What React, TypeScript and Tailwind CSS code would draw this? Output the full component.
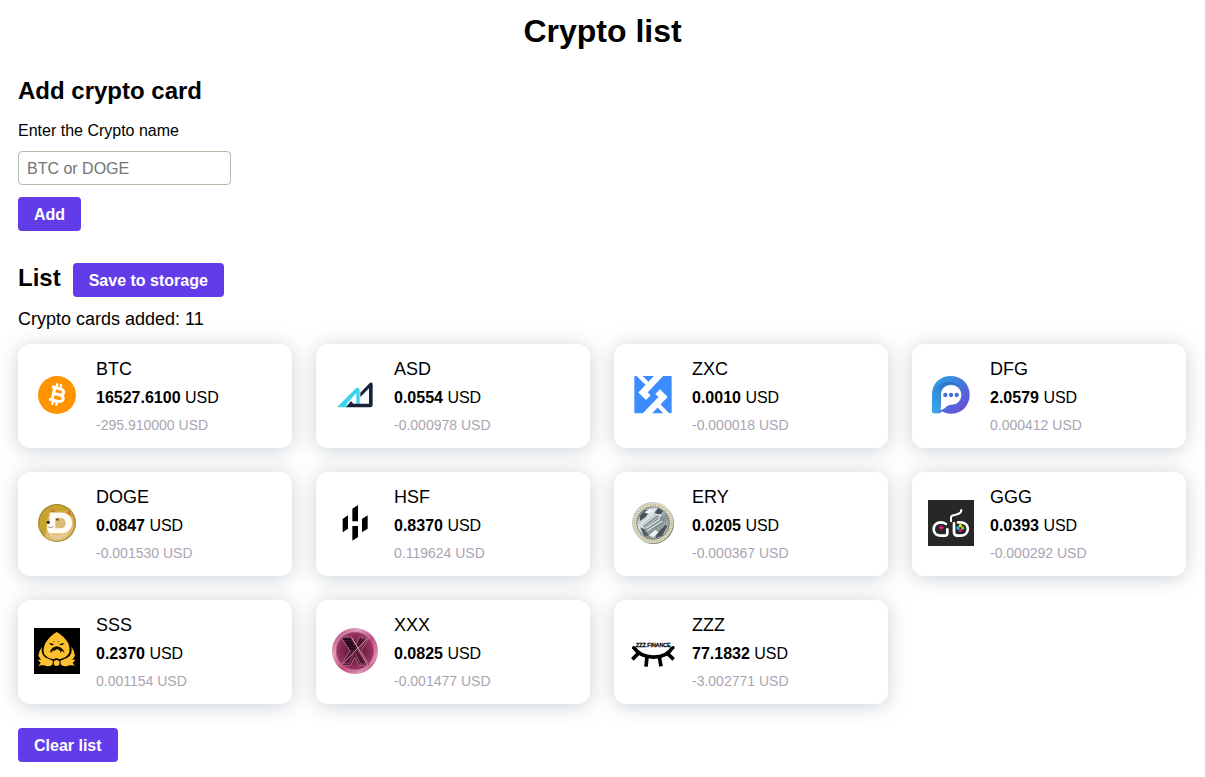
import React, { useState } from "react";

type Coin = {
  symbol: string;
  price: string;
  change: string;
  logo: React.ReactNode;
};

const BtcLogo = () => (
  <>
    <circle cx="87" cy="81" r="57" fill="#ff9400" />
    <g transform="rotate(14 88 80)" fill="none" stroke="#fff">
      <path d="M76 61 V99 M67 61 H92 C109 61 109 79 92 79 H78 M92 79 C114 79 113 99 93 99 H67" strokeWidth="9" />
      <path d="M80 47 V60 M92 47 V60 M80 100 V113 M92 100 V113" strokeWidth="7" />
    </g>
  </>
);

const AsdLogo = () => (
  <>
    <path d="M33 118 L88 62 Q98 55 101 66 V107 H91 V75 L62 107 V118 Z" fill="#3ad5ea" />
    <path d="M60 118 L75 99 L82 107 H129 V61 L103 87 V74 L132 44 Q140 41 140 50 V111 Q140 118 133 118 Z" fill="#17233b" />
  </>
);

const ZxcLogo = () => (
  <>
    <rect x="31" y="24" width="112" height="112" rx="3" fill="#3b8cff" />
    <g fill="none" stroke="#fff">
      <path d="M113 14 L57 73 L73 89" strokeWidth="20" />
      <path d="M61 146 L117 87 L101 71" strokeWidth="20" />
      <path d="M37 14 L74 51 M137 146 L100 109" strokeWidth="13" />
    </g>
  </>
);

const DfgLogo = () => (
  <>
    <defs>
      <linearGradient id="dfg-body" x1="0" y1="0" x2="1" y2="1">
        <stop offset="0" stopColor="#2ba5e8" />
        <stop offset="0.5" stopColor="#4478dc" />
        <stop offset="1" stopColor="#793fd2" />
      </linearGradient>
      <linearGradient id="dfg-fold" x1="0" y1="1" x2="1" y2="0">
        <stop offset="0" stopColor="#38adf0" />
        <stop offset="1" stopColor="#2863b5" />
      </linearGradient>
    </defs>
    <path d="M30 80 C30 46 54 24 86 24 C119 24 143 48 143 80 C143 113 119 137 87 137 C76 137 67 134 60 130 Q56 136 49 136 H38 Q30 136 30 128 Z" fill="url(#dfg-body)" />
    <path d="M42 60 C56 38 91 36 118 56 C104 49 80 45 67 54 C58 60 55 72 55 84 V128 Q51 136 40 136 Q30 136 30 127 V80 Q32 68 42 60 Z" fill="url(#dfg-fold)" />
    <path d="M57 80 C57 63 70 51 87 51 C105 51 118 64 118 80 C118 98 105 110 88 110 C81 110 76 112 70 119 Q63 126 55 125 Q57 119 57 109 Z" fill="#fff" />
    <g fill="#496bda">
      <circle cx="70" cy="81" r="6.5" />
      <circle cx="87" cy="81" r="6.5" />
      <circle cx="104" cy="81" r="6.5" />
    </g>
  </>
);

const DogeLogo = () => (
  <>
    <circle cx="87" cy="81" r="57" fill="#a88b35" />
    <circle cx="87" cy="81" r="53" fill="#c8a32d" />
    <path d="M51 122 Q60 95 58 68 L68 48 L72 37 L83 47 H110 L128 38 L133 60 Q142 90 133 107 Q112 137 82 134 Q60 132 51 122 Z" fill="#dfbd70" />
    <path d="M68 48 L72 37 L83 48 Z M114 49 L128 38 L131 62 Z" fill="#c47f33" />
    <path d="M62 110 Q91 126 123 106 Q113 131 83 131 Q66 128 62 110 Z" fill="#e3cb93" />
    <path d="M65 50 H98 C144 50 144 112 98 112 H66 Q54 104 57 86 L65 72 Z" fill="#fffcf5" />
    <path d="M82 65 H96 C119 66 119 97 96 97 H82 Z" fill="#d8bb75" />
    <circle cx="61" cy="79" r="5" fill="#2e2b27" />
    <path d="M84 68 Q91 65 93 73 L86 74 Z" fill="#4b4030" />
    <path d="M59 92 Q68 98 77 92" fill="none" stroke="#a0947c" strokeWidth="3" />
  </>
);

const HsfLogo = () => (
  <path
    d="M79 38 L96 27 V76 H79 Z M50 69 L66 58 V98 L50 109 Z M108 69 L125 58 V98 L108 109 Z M79 90 H96 V123 L79 134 Z"
    fill="#000"
  />
);

const EryLogo = () => (
  <>
    <defs>
      <linearGradient id="ery-rim" x1="0" y1="0" x2="1" y2="1">
        <stop offset="0" stopColor="#aaa" />
        <stop offset="0.5" stopColor="#ddd" />
        <stop offset="1" stopColor="#333" />
      </linearGradient>
      <linearGradient id="ery-face" x1="0" y1="0" x2="1" y2="1">
        <stop offset="0" stopColor="#5e696c" />
        <stop offset="0.35" stopColor="#e1e7e8" />
        <stop offset="0.6" stopColor="#889294" />
        <stop offset="1" stopColor="#d4dadb" />
      </linearGradient>
    </defs>
    <circle cx="87" cy="81" r="63" fill="url(#ery-rim)" />
    <circle cx="87" cy="81" r="55" fill="none" stroke="#e2dfc6" strokeWidth="10" />
    <circle cx="87" cy="81" r="55" fill="none" stroke="#b5ae7c" strokeWidth="6" strokeDasharray="3 5" />
    <circle cx="87" cy="81" r="49" fill="url(#ery-face)" stroke="#676d6e" strokeWidth="2" />
    <path d="M47 60 L61 43 L80 42 L65 63 L48 75 Z M103 35 L118 46 L108 58 L91 50 Z M49 94 L67 103 L73 119 L61 119 Z M99 111 L125 86 L130 90 L115 119 L94 127 Z" fill="#4b5558" />
    <path d="M60 49 L80 38 L91 43 L74 54 Z M75 118 L94 102 L104 109 L88 124 Z" fill="#eff3f3" />
    <g fill="none" strokeLinejoin="round">
      <path d="M58 90 L97 59 H112 L105 68 M68 98 L108 68 L118 76 M65 110 L72 99 L116 77" stroke="#7b888c" strokeWidth="9" />
      <path d="M58 88 L97 57 H112 L103 67 M68 96 L108 69 M68 105 L115 75" stroke="#e1e8ea" strokeWidth="4" />
    </g>
  </>
);

const GggLogo = () => (
  <>
    <rect x="18" y="12" width="138" height="138" fill="#272727" />
    <g fill="none" stroke="#fff" strokeWidth="8" strokeLinecap="round" strokeLinejoin="round">
      <path d="M72 84 C55 73 35 82 35 100 C35 112 44 119 56 119 H68 Q76 119 76 111 V100" />
      <path d="M87 76 V66 Q87 58 95 58 L108 54 Q118 51 118 42" strokeWidth="6" />
      <path d="M96 82 V108 Q96 119 107 119 H116 C144 119 145 79 116 79 H108" />
    </g>
    <path d="M51 95 H65 M58 88 V102" stroke="#f50b83" strokeWidth="5" />
    <circle cx="115" cy="89" r="5" fill="#ffe100" />
    <circle cx="108" cy="96" r="5" fill="#16c9e8" />
    <circle cx="122" cy="96" r="5" fill="#76d631" />
    <circle cx="115" cy="103" r="5" fill="#f20c93" />
  </>
);

const SssLogo = () => (
  <>
    <rect x="18" y="12" width="138" height="138" fill="#000" />
    <g fill="#fdc02f">
      <path d="M86 24 Q108 36 121 58 Q131 88 114 98 Q101 105 94 106 Q86 100 77 106 Q55 101 48 89 Q44 76 52 58 Q65 36 86 24 Z" />
      <path d="M42 68 Q37 91 54 101 L75 110 L73 122 Q61 130 48 124 Q37 122 31 127 L38 116 L29 107 H39 L31 95 Q34 78 42 68 Z" />
      <path d="M130 68 Q135 91 118 101 L97 110 L99 122 Q111 130 124 124 Q135 122 141 127 L134 116 L143 107 H133 L141 95 Q138 78 130 68 Z" />
      <circle cx="86" cy="117" r="9" />
    </g>
    <path d="M63 57 L77 60 L75 64 Q67 65 63 57 Z M109 57 L95 60 L97 64 Q105 65 109 57 Z" fill="#000" />
    <path d="M64 87 Q68 70 86 67 Q106 70 110 87 L102 80 L98 86 L94 78 L86 76 L79 81 L75 79 L71 86 L67 82 Z" fill="#171102" />
    <circle cx="78" cy="53" r="2" fill="#83600c" />
    <circle cx="92" cy="53" r="2" fill="#83600c" />
  </>
);

const XxxLogo = () => (
  <>
    <defs>
      <linearGradient id="xxx-rim" x1="0" y1="0" x2="1" y2="1">
        <stop offset="0" stopColor="#a52c65" />
        <stop offset="0.3" stopColor="#e3a0be" />
        <stop offset="0.55" stopColor="#c04b80" />
        <stop offset="0.78" stopColor="#dd8fb2" />
        <stop offset="1" stopColor="#8c1c50" />
      </linearGradient>
      <radialGradient id="xxx-face">
        <stop offset="0" stopColor="#481028" />
        <stop offset="1" stopColor="#9f3565" />
      </radialGradient>
    </defs>
    <circle cx="87" cy="81" r="69" fill="url(#xxx-rim)" />
    <circle cx="87" cy="81" r="57" fill="url(#xxx-face)" stroke="#c27297" strokeWidth="2" />
    <path d="M46 39 H76 L89 63 L101 39 H130 L105 80 L130 124 H99 L87 99 L73 124 H44 L72 81 Z" fill="#4b152d" stroke="#b26685" strokeWidth="3" />
    <path d="M51 46 H74 M56 53 H78 M60 60 H81 M64 67 H85 M69 74 H88" stroke="#190812" strokeWidth="4" />
    <path d="M105 44 H122 L97 81 L122 120 H104 L87 86 M83 90 L69 118 H52" fill="none" stroke="#8b3b5c" strokeWidth="4" />
    <path d="M77 40 L126 124 M127 40 L47 123" stroke="#d794b2" strokeWidth="3" />
  </>
);

const ZzzLogo = () => (
  <>
    <g fill="none" stroke="#000" strokeWidth="11">
      <path d="M29 70 C53 108 123 110 146 70" />
      <path d="M43 88 L25 106 M69 98 L66 128 M106 98 L111 127 M129 87 L149 106" />
    </g>
    <circle cx="29" cy="71" r="5" />
    <circle cx="147" cy="71" r="5" />
    <text x="36" y="69" fontFamily="Liberation Sans, sans-serif" fontSize="16" fill="#000" stroke="#000" strokeWidth="1">
      ZZZ.FINANCE
    </text>
  </>
);

const initialCoins: Coin[] = [
  { symbol: "BTC", price: "16527.6100", change: "-295.910000", logo: <BtcLogo /> },
  { symbol: "ASD", price: "0.0554", change: "-0.000978", logo: <AsdLogo /> },
  { symbol: "ZXC", price: "0.0010", change: "-0.000018", logo: <ZxcLogo /> },
  { symbol: "DFG", price: "2.0579", change: "0.000412", logo: <DfgLogo /> },
  { symbol: "DOGE", price: "0.0847", change: "-0.001530", logo: <DogeLogo /> },
  { symbol: "HSF", price: "0.8370", change: "0.119624", logo: <HsfLogo /> },
  { symbol: "ERY", price: "0.0205", change: "-0.000367", logo: <EryLogo /> },
  { symbol: "GGG", price: "0.0393", change: "-0.000292", logo: <GggLogo /> },
  { symbol: "SSS", price: "0.2370", change: "0.001154", logo: <SssLogo /> },
  { symbol: "XXX", price: "0.0825", change: "-0.001477", logo: <XxxLogo /> },
  { symbol: "ZZZ", price: "77.1832", change: "-3.002771", logo: <ZzzLogo /> },
];

function Button({ children, onClick, type = "button" }: { children: React.ReactNode; onClick?: () => void; type?: "button" | "submit" }) {
  return (
    <button
      type={type}
      onClick={onClick}
      className="h-[34px] cursor-pointer rounded-[4px] bg-[#623ce9] px-4 pt-0.5 text-base leading-6 font-bold text-white"
    >
      {children}
    </button>
  );
}

function CoinCard({ coin }: { coin: Coin }) {
  return (
    <li className="flex items-center gap-4 rounded-xl bg-white px-4 py-[10px] shadow-[0_2px_20px_rgba(140,152,164,0.45)]">
      <svg viewBox="18 12 138 138" className="mb-0.5 size-[46px] shrink-0" aria-hidden="true">
        {coin.logo}
      </svg>
      <div>
        <h3 className="text-lg leading-[30px]">{coin.symbol}</h3>
        <p className="text-base leading-7">
          <strong>{coin.price}</strong> USD
        </p>
        <p className="text-sm leading-[26px] text-[#aaa4b2]">{coin.change} USD</p>
      </div>
    </li>
  );
}

export default function App() {
  const [coins, setCoins] = useState(initialCoins);
  const [name, setName] = useState("");

  const addCoin = (event: React.FormEvent) => {
    event.preventDefault();
    const symbol = name.trim().toUpperCase();
    if (!symbol) return;
    setCoins([...coins, { symbol, price: "0.0000", change: "0.000000", logo: null }]);
    setName("");
  };

  const saveCoins = () => {
    localStorage.setItem("coins", JSON.stringify(coins.map((coin) => coin.symbol)));
  };

  return (
    <main className="px-[18px] pt-3 pb-4 font-['Liberation_Sans',Arial,sans-serif] text-black">
      <h1 className="text-center text-[32px] leading-[38px] font-bold">Crypto list</h1>

      <form onSubmit={addCoin} className="mt-[27px] flex flex-col items-start">
        <h2 className="text-2xl leading-7 font-bold">Add crypto card</h2>
        <label htmlFor="crypto-name" className="mt-4 leading-5">
          Enter the Crypto name
        </label>
        <input
          id="crypto-name"
          value={name}
          onChange={(event) => setName(event.target.value)}
          placeholder="BTC or DOGE"
          className="mt-[10px] mb-3 h-[34px] w-[213px] rounded-[4px] border border-[#adbfa9] bg-white px-2 pt-0.5 text-base placeholder:text-[#757575]"
        />
        <Button type="submit">Add</Button>
      </form>

      <section className="mt-8">
        <div className="flex items-center gap-3">
          <h2 className="pb-1 text-2xl leading-7 font-bold">List</h2>
          <Button onClick={saveCoins}>Save to storage</Button>
        </div>
        <p className="mt-2 text-lg leading-7">Crypto cards added: {coins.length}</p>
        <ul className="mt-[11px] mb-6 grid grid-cols-[repeat(auto-fill,274px)] gap-6">
          {coins.map((coin, index) => (
            <CoinCard key={index} coin={coin} />
          ))}
        </ul>
        <Button onClick={() => setCoins([])}>Clear list</Button>
      </section>
    </main>
  );
}
